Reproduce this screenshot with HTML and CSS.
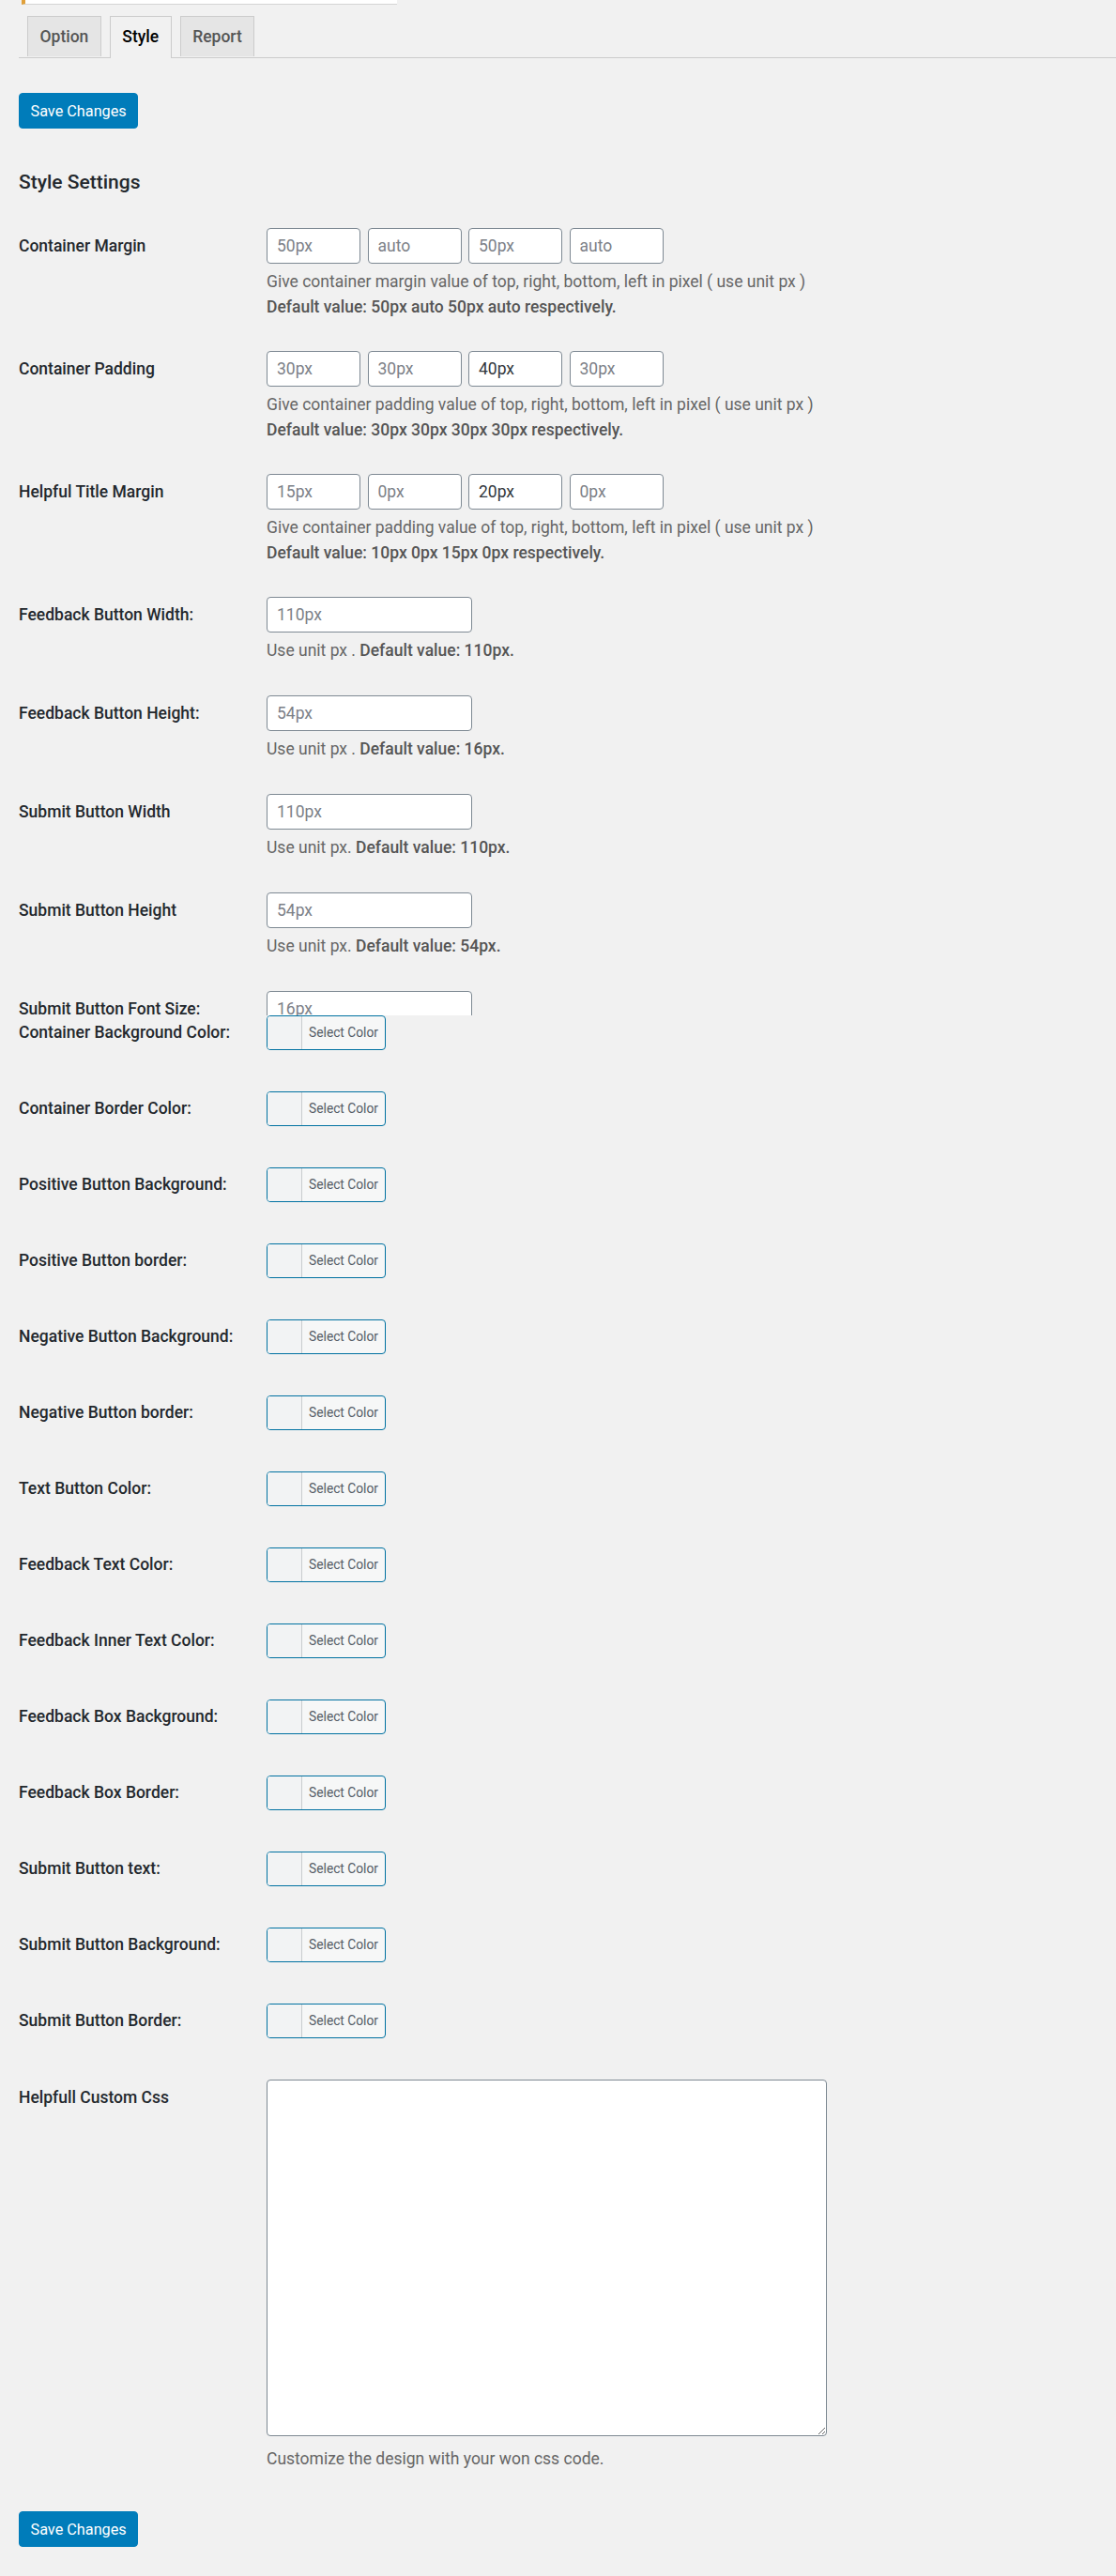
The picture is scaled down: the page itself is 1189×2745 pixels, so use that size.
FILE: index.html
```html
<!DOCTYPE html>
<html lang="en">
<head>
<meta charset="utf-8">
<title>Style Settings</title>
<link rel="stylesheet" href="styles.css">
</head>
<body>
<div class="wrap">
  <div class="notice"></div>

  <nav class="tabs">
    <a class="tab">Option</a>
    <a class="tab active">Style</a>
    <a class="tab">Report</a>
  </nav>

  <div class="actions actions-top"><button class="btn-primary">Save Changes</button></div>

  <h2 class="title">Style Settings</h2>

  <div class="form">
    <div class="row">
      <div class="label">Container Margin</div>
      <div class="field">
        <div class="quad">
          <input class="inp" placeholder="50px">
          <input class="inp" placeholder="auto">
          <input class="inp" placeholder="50px">
          <input class="inp" placeholder="auto">
        </div>
        <p class="desc">Give container margin value of top, right, bottom, left in pixel ( use unit px )<br><b>Default value: 50px auto 50px auto respectively.</b></p>
      </div>
    </div>

    <div class="row">
      <div class="label">Container Padding</div>
      <div class="field">
        <div class="quad">
          <input class="inp" placeholder="30px">
          <input class="inp" placeholder="30px">
          <input class="inp" value="40px">
          <input class="inp" placeholder="30px">
        </div>
        <p class="desc">Give container padding value of top, right, bottom, left in pixel ( use unit px )<br><b>Default value: 30px 30px 30px 30px respectively.</b></p>
      </div>
    </div>

    <div class="row">
      <div class="label">Helpful Title Margin</div>
      <div class="field">
        <div class="quad">
          <input class="inp" placeholder="15px">
          <input class="inp" placeholder="0px">
          <input class="inp" value="20px">
          <input class="inp" placeholder="0px">
        </div>
        <p class="desc">Give container padding value of top, right, bottom, left in pixel ( use unit px )<br><b>Default value: 10px 0px 15px 0px respectively.</b></p>
      </div>
    </div>

    <div class="row row-single">
      <div class="label">Feedback Button Width:</div>
      <div class="field">
        <input class="inp wide" placeholder="110px">
        <p class="desc">Use unit px . <b>Default value: 110px.</b></p>
      </div>
    </div>

    <div class="row row-single">
      <div class="label">Feedback Button Height:</div>
      <div class="field">
        <input class="inp wide" placeholder="54px">
        <p class="desc">Use unit px . <b>Default value: 16px.</b></p>
      </div>
    </div>

    <div class="row row-single">
      <div class="label">Submit Button Width</div>
      <div class="field">
        <input class="inp wide" placeholder="110px">
        <p class="desc">Use unit px. <b>Default value: 110px.</b></p>
      </div>
    </div>

    <div class="row row-single">
      <div class="label">Submit Button Height</div>
      <div class="field">
        <input class="inp wide" placeholder="54px">
        <p class="desc">Use unit px. <b>Default value: 54px.</b></p>
      </div>
    </div>

    <div class="row row-cut">
      <div class="label">Submit Button Font Size:</div>
      <div class="field field-cut">
        <input class="inp wide" placeholder="16px">
      </div>
    </div>
  </div>

  <div class="form colors">
    <div class="crow"><div class="label">Container Background Color:</div><button class="color-btn"><span class="swatch"></span><span class="cb-text">Select Color</span></button></div>
    <div class="crow"><div class="label">Container Border Color:</div><button class="color-btn"><span class="swatch"></span><span class="cb-text">Select Color</span></button></div>
    <div class="crow"><div class="label">Positive Button Background:</div><button class="color-btn"><span class="swatch"></span><span class="cb-text">Select Color</span></button></div>
    <div class="crow"><div class="label">Positive Button border:</div><button class="color-btn"><span class="swatch"></span><span class="cb-text">Select Color</span></button></div>
    <div class="crow"><div class="label">Negative Button Background:</div><button class="color-btn"><span class="swatch"></span><span class="cb-text">Select Color</span></button></div>
    <div class="crow"><div class="label">Negative Button border:</div><button class="color-btn"><span class="swatch"></span><span class="cb-text">Select Color</span></button></div>
    <div class="crow"><div class="label">Text Button Color:</div><button class="color-btn"><span class="swatch"></span><span class="cb-text">Select Color</span></button></div>
    <div class="crow"><div class="label">Feedback Text Color:</div><button class="color-btn"><span class="swatch"></span><span class="cb-text">Select Color</span></button></div>
    <div class="crow"><div class="label">Feedback Inner Text Color:</div><button class="color-btn"><span class="swatch"></span><span class="cb-text">Select Color</span></button></div>
    <div class="crow"><div class="label">Feedback Box Background:</div><button class="color-btn"><span class="swatch"></span><span class="cb-text">Select Color</span></button></div>
    <div class="crow"><div class="label">Feedback Box Border:</div><button class="color-btn"><span class="swatch"></span><span class="cb-text">Select Color</span></button></div>
    <div class="crow"><div class="label">Submit Button text:</div><button class="color-btn"><span class="swatch"></span><span class="cb-text">Select Color</span></button></div>
    <div class="crow"><div class="label">Submit Button Background:</div><button class="color-btn"><span class="swatch"></span><span class="cb-text">Select Color</span></button></div>
    <div class="crow"><div class="label">Submit Button Border:</div><button class="color-btn"><span class="swatch"></span><span class="cb-text">Select Color</span></button></div>

    <div class="row row-css">
      <div class="label">Helpfull Custom Css</div>
      <div class="field">
        <textarea class="css-area"></textarea>
        <p class="desc desc-css">Customize the design with your won css code.</p>
      </div>
    </div>
  </div>

  <div class="actions actions-bottom"><button class="btn-primary">Save Changes</button></div>
</div>
</body>
</html>
```

FILE: styles.css
```css
* {
  box-sizing: border-box;
}

html,
body {
  margin: 0;
  padding: 0;
  background: #f1f1f1;
}

body {
  width: 1189px;
  font-family: Roboto, "Liberation Sans", Arial, sans-serif;
  font-size: 16.25px;
  color: #23282d;
}

.wrap {
  padding: 0 0 31px 20px;
}

/* top notice remnant */
.notice {
  margin-left: 3px;
  width: 400px;
  height: 5px;
  background: #fff;
  border-left: 4px solid #e0a03a;
  border-bottom: 1px solid #d5d5d5;
}

/* tabs */
.tabs {
  display: flex;
  align-items: flex-start;
  gap: 9px;
  margin-top: 12px;
  padding-left: 9px;
  height: 45px;
  border-bottom: 1px solid #ccc;
}

.tab {
  height: 43px;
  padding: 0 12.5px;
  line-height: 42px;
  font-size: 17.5px;
  font-weight: 500;
  color: #555;
  background: #e5e5e5;
  border: 1px solid #ccc;
  border-bottom: none;
  text-decoration: none;
}

.tab.active {
  height: 45px;
  background: #f1f1f1;
  color: #000;
}

/* buttons */
.actions-top {
  margin-top: 37px;
}

.actions-bottom {
  margin-top: 42px;
}

.btn-primary {
  height: 38px;
  padding: 0 11.5px;
  font-family: inherit;
  font-size: 16.25px;
  color: #fff;
  background: #007cba;
  border: 1px solid #007cba;
  border-radius: 4px;
}

.title {
  margin: 44px 0 0;
  font-size: 21px;
  line-height: 26px;
  font-weight: 500;
  color: #23282d;
}

/* form rows */
.form {
  width: 1169px;
}

.title + .form {
  margin-top: 20px;
}

.row {
  display: grid;
  grid-template-columns: 264px 1fr;
  padding: 16px 0 17px;
}

.row-single {
  padding-bottom: 18px;
}

.label {
  font-size: 17.5px;
  line-height: 38px;
  font-weight: 500;
  color: #23282d;
}

.quad {
  display: flex;
  gap: 7.5px;
}

.inp {
  display: block;
  width: 100px;
  height: 38px;
  padding: 0 10px;
  font-family: inherit;
  font-size: 17.5px;
  color: #32373c;
  background: #fff;
  border: 1px solid #7e8993;
  border-radius: 4px;
}

.inp::placeholder {
  color: #7c8087;
}

.inp.wide {
  width: 219px;
}

.desc {
  margin: 6px 0 0;
  font-size: 17.5px;
  line-height: 27px;
  color: #666;
}

.desc b {
  font-weight: 500;
  color: #555;
}

.row-cut {
  height: 42px;
  padding-bottom: 0;
}

.field-cut {
  height: 26px;
  overflow: hidden;
}

/* colour pickers */
.crow {
  display: grid;
  grid-template-columns: 264px 1fr;
  padding-bottom: 44px;
}

.crow .label {
  line-height: 37px;
}

.color-btn {
  display: flex;
  width: 127px;
  height: 37px;
  padding: 0;
  background: #f6f7f7;
  border: 1px solid #0071a1;
  border-radius: 4px;
  overflow: hidden;
  font-family: inherit;
}

.swatch {
  width: 37px;
  height: 100%;
  background: #f2f3f4;
  border-right: 1px solid #c9cccf;
}

.cb-text {
  flex: 1;
  font-size: 13.75px;
  line-height: 35px;
  color: #555d66;
  text-align: center;
}

/* custom css */
.row-css {
  padding: 0;
}

.css-area {
  display: block;
  width: 597px;
  height: 380px;
  background: #fff;
  border: 1px solid #7e8993;
  border-radius: 4px;
}

.desc-css {
  margin-top: 11px;
}
```
